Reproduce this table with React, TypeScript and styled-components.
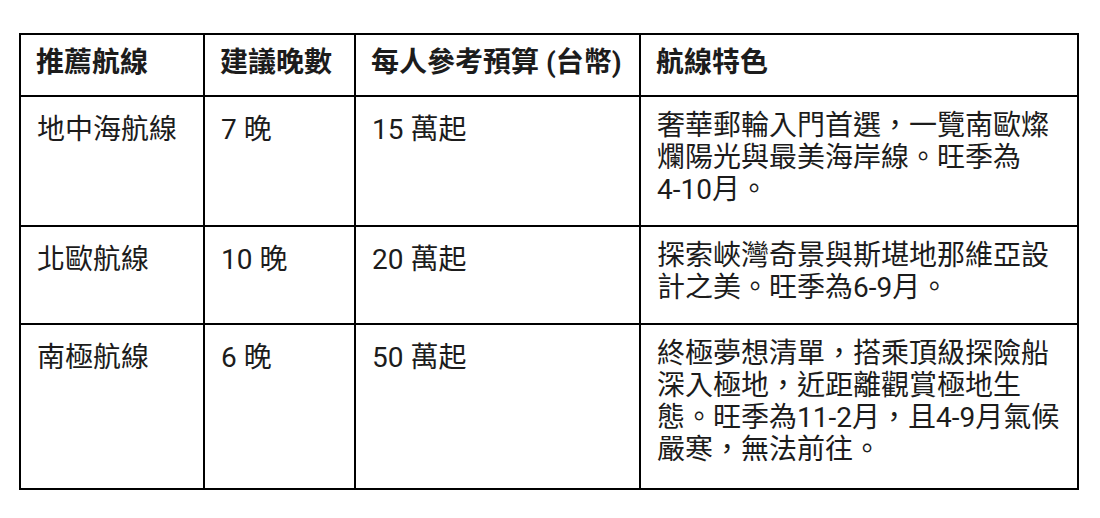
import React from "react";
import styled, { createGlobalStyle } from "styled-components";

const Global = createGlobalStyle`
  html, body { margin: 0; padding: 0; background: #fff; }
  body { font-family: Roboto, "Noto Sans CJK TC", sans-serif; color: #1c1c1c; }
`;

const Page = styled.div`
  padding: 33px 0 0 19px;
`;

const Table = styled.table`
  border-collapse: collapse;
  width: 1058px;
  table-layout: fixed;
  font-size: 28px;
  line-height: 32px;
`;

const Col = styled.col<{ $w: number }>`
  width: ${(p) => p.$w}px;
`;

const HeadCell = styled.th`
  border: 2px solid #000;
  padding: 12px 15px 16px;
  text-align: left;
  font-weight: 700;
  vertical-align: top;
  white-space: nowrap;
`;

const Row = styled.tr`
  &:last-child td {
    padding-bottom: 22px;
  }
`;

const Cell = styled.td<{ $desc?: boolean }>`
  border: 2px solid #000;
  padding: 13px 15px 19px 16px;
  text-align: left;
  vertical-align: top;
  font-weight: 400;
  line-height: ${(p) => (p.$desc ? "32px" : "40px")};
`;

const NoWrap = styled.span`
  white-space: nowrap;
`;

type Seg = string | { nw: string };

const rows: [string, string, string, Seg[]][] = [
  ["地中海航線", "7 晚", "15 萬起", ["奢華郵輪入門首選，一覽南歐燦爛陽光與最美海岸線。旺季為", { nw: "4-10月" }, "。"]],
  ["北歐航線", "10 晚", "20 萬起", ["探索峽灣奇景與斯堪地那維亞設計之美。旺季為", { nw: "6-9月" }, "。"]],
  [
    "南極航線",
    "6 晚",
    "50 萬起",
    ["終極夢想清單，搭乘頂級探險船深入極地，近距離觀賞極地生態。旺季為", { nw: "11-2月" }, "，且", { nw: "4-9月" }, "氣候嚴寒，無法前往。"],
  ],
];

const widths = [184, 151, 285, 438];
const heads = ["推薦航線", "建議晚數", "每人參考預算 (台幣)", "航線特色"];

export default function App() {
  return (
    <>
      <Global />
      <Page>
        <Table>
          <colgroup>
            {widths.map((w, i) => (
              <Col key={i} $w={w} />
            ))}
          </colgroup>
          <thead>
            <tr>
              {heads.map((h) => (
                <HeadCell key={h}>{h}</HeadCell>
              ))}
            </tr>
          </thead>
          <tbody>
            {rows.map((r) => (
              <Row key={r[0]}>
                <Cell>{r[0]}</Cell>
                <Cell>{r[1]}</Cell>
                <Cell>{r[2]}</Cell>
                <Cell $desc>
                  {r[3].map((s, i) =>
                    typeof s === "string" ? (
                      <React.Fragment key={i}>{s}</React.Fragment>
                    ) : (
                      <NoWrap key={i}>{s.nw}</NoWrap>
                    )
                  )}
                </Cell>
              </Row>
            ))}
          </tbody>
        </Table>
      </Page>
    </>
  );
}
